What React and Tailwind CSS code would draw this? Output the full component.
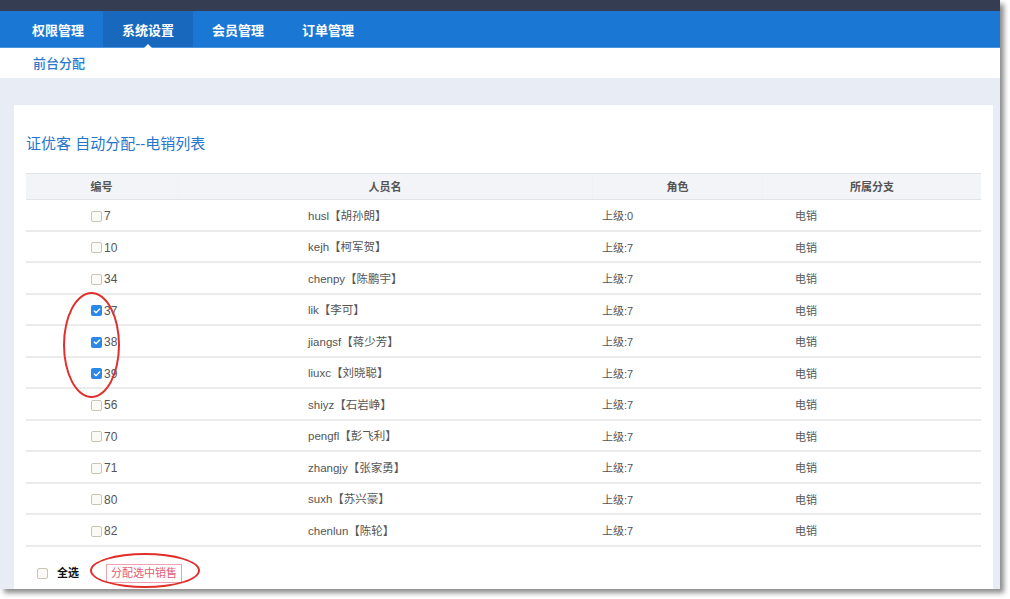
import { Check } from 'lucide-react'

const tabs = ['权限管理', '系统设置', '会员管理', '订单管理']

const rows = [
  { id: 7, name: 'husl【胡孙朗】', role: '上级:0' },
  { id: 10, name: 'kejh【柯军贺】', role: '上级:7' },
  { id: 34, name: 'chenpy【陈鹏宇】', role: '上级:7' },
  { id: 37, name: 'lik【李可】', role: '上级:7', checked: true },
  { id: 38, name: 'jiangsf【蒋少芳】', role: '上级:7', checked: true },
  { id: 39, name: 'liuxc【刘晓聪】', role: '上级:7', checked: true },
  { id: 56, name: 'shiyz【石岩峥】', role: '上级:7' },
  { id: 70, name: 'pengfl【彭飞利】', role: '上级:7' },
  { id: 71, name: 'zhangjy【张家勇】', role: '上级:7' },
  { id: 80, name: 'suxh【苏兴豪】', role: '上级:7' },
  { id: 82, name: 'chenlun【陈轮】', role: '上级:7' },
]

function Box({ checked }) {
  if (checked)
    return (
      <span className="flex items-center justify-center w-[11px] h-[11px] rounded-[2px] bg-[#2b87e8]">
        <Check className="w-[8px] h-[8px] text-white" strokeWidth={4} />
      </span>
    )
  return <span className="block w-[11px] h-[11px] rounded-[2px] border border-[#c9c4b4] bg-[#fbfaf6]" />
}

export default function App() {
  return (
    <div className="w-[1010px] h-[599px] bg-white" style={{ fontFamily: '"Liberation Sans","Noto Sans CJK SC",sans-serif' }}>
      <div className="relative w-[1000px] h-[589px] overflow-hidden bg-[#e8edf5] shadow-[4px_4px_5px_rgba(0,0,0,0.45)] flex flex-col">
        <div className="shrink-0 h-[11px] bg-[#343d52]" />
        <div className="shrink-0 h-[37px] bg-[#1a78d4] flex pl-[13px] border-b border-[#4a95e0]">
          {tabs.map((t, i) => (
            <div
              key={t}
              className={`relative w-[90px] flex items-center justify-center pt-[3px] text-[13px] font-bold text-white ${i === 1 ? 'bg-[#1869be]' : ''}`}
            >
              {t}
              {i === 1 && (
                <span className="absolute bottom-[-1px] left-1/2 -translate-x-1/2 w-0 h-0 border-l-[4px] border-r-[4px] border-b-[4px] border-l-transparent border-r-transparent border-b-white" />
              )}
            </div>
          ))}
        </div>
        <div className="shrink-0 h-[30px] bg-white flex items-center pl-[33px] pt-[2px] text-[13px] font-medium text-[#2c7bd0]">前台分配</div>
        <div className="shrink-0 pt-[27px] pl-[14px] pr-[7px]">
          <div className="bg-white pl-[12px] pr-[12px]">
            <div className="pt-[28px] h-[68px] text-[15px] text-[#2576cc]">证优客 自动分配--电销列表</div>
            <div className="w-[955px]">
              <div className="flex h-[27px] pt-[2px] bg-[#f3f4f7] border-y border-[#e1e3e8] text-[11px] font-bold text-[#555]">
                <div className="w-[151px] flex items-center justify-center">编号</div>
                <div className="w-[415px] flex items-center justify-center border-l border-[#f0f1f4]">人员名</div>
                <div className="w-[170px] flex items-center justify-center border-l border-[#f0f1f4]">角色</div>
                <div className="flex-1 flex items-center justify-center border-l border-[#f0f1f4]">所属分支</div>
              </div>
              {rows.map((r) => (
                <div key={r.id} className="flex h-[31.5px] pt-[3px] items-center border-b-2 border-[#ebebeb] text-[11px] text-[#555]">
                  <div className="w-[151px] flex items-center pl-[65px] gap-[2px]">
                    <Box checked={r.checked} />
                    <span className="text-[12px]">{r.id}</span>
                  </div>
                  <div className="w-[415px] pl-[131px] text-[11.5px]">{r.name}</div>
                  <div className="w-[170px] pl-[10px]">{r.role}</div>
                  <div className="flex-1 pl-[33px]">电销</div>
                </div>
              ))}
              <div className="flex items-center h-[54px] pl-[11px]">
                <Box />
                <span className="ml-[9px] text-[11px] font-bold text-[#111]">全选</span>
                <span className="ml-[27px] h-[19px] px-[4px] flex items-center border border-[#f1a1ad] text-[11px] text-[#e45b73]">分配选中销售</span>
              </div>
            </div>
          </div>
        </div>
        <div className="absolute left-[63px] top-[292px] w-[57px] h-[106px] rounded-[50%] border-2 border-[#e0302c]" />
        <div className="absolute left-[90px] top-[553px] w-[110px] h-[35px] rounded-[50%] border-2 border-[#e0302c]" />
      </div>
    </div>
  )
}
